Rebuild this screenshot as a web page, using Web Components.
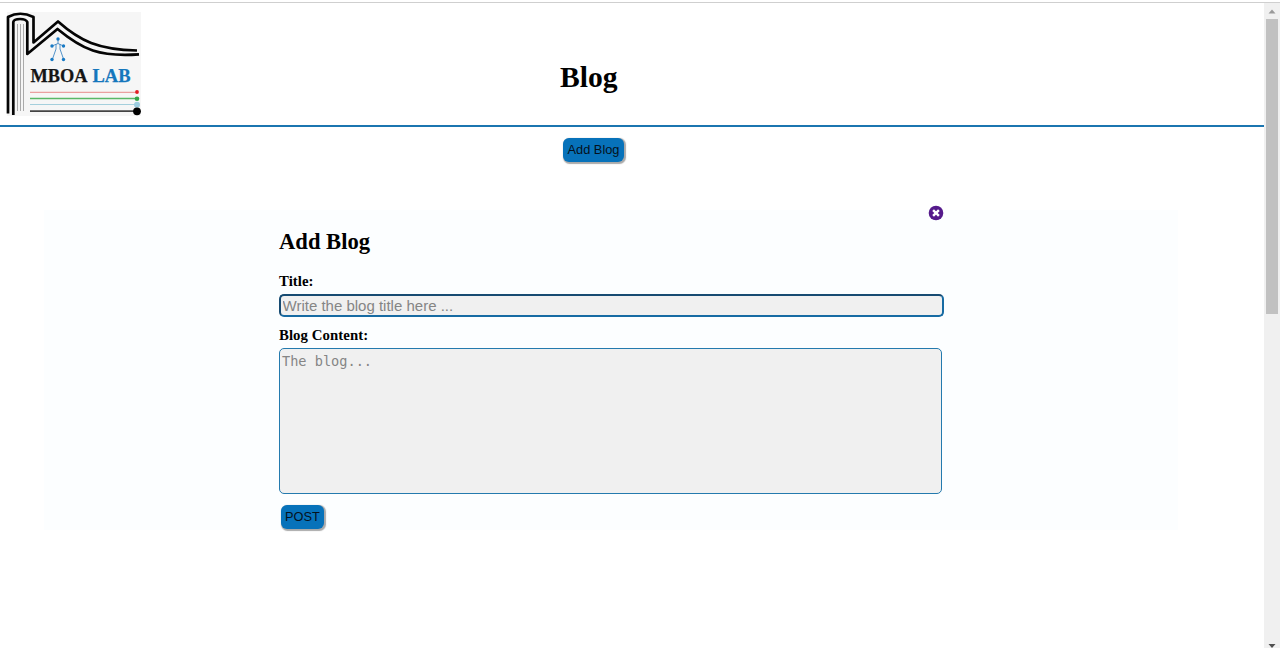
<!DOCTYPE html>
<html lang="en">
<head>
<meta charset="utf-8">
<title>Blog</title>
<style>html,body{margin:0;height:100%;overflow:hidden;background:#fff}</style>
</head>
<body>
<blog-app></blog-app>
<script>
const define = (name, html) => customElements.define(name, class extends HTMLElement {
  constructor() {
    super();
    const t = document.createElement('template');
    t.innerHTML = html;
    this.attachShadow({ mode: 'open' }).appendChild(t.content.cloneNode(true));
  }
});

define('mboa-logo', `
<style>:host{display:block;width:144px;height:112px}svg{display:block}</style>
<svg width="144" height="112" viewBox="0 8 144 112" fill="none">
  <rect x="7" y="12" width="134" height="104" fill="#f6f6f6"/>
  <g stroke="#aaa" stroke-width="1"><path d="M17.500 24V111M20.500 24V111M23.500 24V111"/></g>
  <g stroke="#050505" stroke-width="2.700" stroke-linejoin="round">
    <path d="M8 113.500V17Q20 10.500 33.500 17V42.500L58 21.500C80 41 98 49.500 137 50.500"/>
    <path d="M13.300 115V22Q14 19 20 19T27.300 22V54L57.500 29C83 50 99 57 139 54.300"/>
  </g>
  <g stroke="#4288c4" stroke-width=".9"><path d="M58 39V43.500M56 44V49L52.500 59M60 44V49L63.500 59M52 46L58 43.500L63.500 46"/></g>
  <g fill="#1779c4"><circle cx="58" cy="39" r="1.700"/><circle cx="52" cy="46" r="1.700"/><circle cx="63.500" cy="46" r="1.700"/><circle cx="52" cy="59.500" r="1.700"/><circle cx="63.500" cy="59.500" r="1.700"/></g>
  <g font-family="Liberation Serif,serif" font-weight="700" font-size="18">
    <text x="30.500" y="82" fill="#151515" stroke="#151515" stroke-width=".25" textLength="57" lengthAdjust="spacingAndGlyphs">MBOA</text>
    <text x="92.500" y="82" fill="#1577bd" stroke="#1577bd" stroke-width=".25" textLength="38" lengthAdjust="spacingAndGlyphs">LAB</text>
  </g>
  <path d="M30 92.300H137" stroke="#e88b8b"/><path d="M30 98.600H137" stroke="#59b867" stroke-width="1.500"/><path d="M30 104.500H137" stroke="#a5cfdc" stroke-width="1.200"/><path d="M30 111.200H137" stroke="#444" stroke-width="1.800"/>
  <circle cx="137" cy="92" r="1.900" fill="#e21d24"/><circle cx="137" cy="98.700" r="2.300" fill="#35a64a"/><circle cx="137" cy="104.700" r="3" fill="#9dcde0"/><circle cx="137" cy="111.300" r="3.900" fill="#000"/>
</svg>`);

define('page-header', `
<style>
:host{display:flex;box-sizing:border-box;height:127px;border-bottom:2px solid #1b75b0;padding-top:8px}
h1{margin:52px 0 0 416px;font:700 29.600px/34px "Liberation Serif",serif;color:#000}
</style>
<mboa-logo></mboa-logo><h1><slot></slot></h1>`);

define('action-button', `
<style>
:host{display:block;width:max-content}
button{display:block;box-sizing:border-box;width:var(--w);height:24px;margin:0;padding:0 0 1px;border:0;border-radius:6px;background:#0772ba;color:#05111c;font:12.800px/22px "Liberation Sans",sans-serif;box-shadow:1px 1px 1px .5px #aaa;white-space:nowrap}
</style>
<button type="button"><slot></slot></button>`);

define('close-icon', `
<style>:host{display:block;width:16px;height:16px}svg{display:block}</style>
<svg width="16" height="16" viewBox="0 0 16 16"><circle cx="8" cy="8" r="7.300" fill="#551a8b"/><path d="M5.100 5.100L10.900 10.900M10.900 5.100L5.100 10.900" stroke="#fff" stroke-width="2.400"/></svg>`);

define('blog-form', `
<style>
:host{display:flow-root;box-sizing:border-box;width:1134px;height:320px;margin:48px 0 0 44px;padding-left:235px;background:#fcfeff}
form{width:665px;display:flex;flex-direction:column;align-items:flex-start;margin-top:-5px}
close-icon{align-self:flex-end}
h2{margin:7px 0 0;font:700 22.600px/27px "Liberation Serif",serif}
label{font:700 14.800px/18px "Liberation Serif",serif;color:#000;letter-spacing:.06px}
.title{margin-top:17px}
input,textarea{box-sizing:border-box;display:block;margin:0;background:#f0f0f0;outline:0;resize:none;overflow:hidden}
input{width:665px;height:23px;margin:4px 0 9px;padding:0 2px 1px 1.500px;border:2px solid #176ba3;border-top-color:#174b72;border-left-color:#174b72;border-radius:5px;font:15px "Liberation Sans",sans-serif}
textarea{width:663px;height:146px;margin:4px 0 11px;padding:4px 2px;border:1px solid #247aae;border-radius:5px;font:13.600px/17px "DejaVu Sans Mono",monospace}
::placeholder{color:#858585;opacity:1}
action-button{margin-left:2px}
</style>
<form>
  <close-icon></close-icon>
  <h2>Add Blog</h2>
  <label class="title" for="t">Title:</label>
  <input id="t" placeholder="Write the blog title here ...">
  <label for="c">Blog Content:</label>
  <textarea id="c" placeholder="The blog..."></textarea>
  <action-button style="--w:43px">POST</action-button>
</form>`);

define('scroll-rail', `
<style>
:host{display:flex;flex-direction:column;justify-content:space-between;align-items:center;box-sizing:border-box;width:16px;height:645px;margin-top:3px;background:#f0f0f0}
svg{display:block}.thumb{width:12px;height:295px;margin-bottom:auto;background:#c1c1c1}
</style>
<svg width="16" height="16"><path d="M4.500 10.500L8 6.500L11.500 10.500Z" fill="#999"/></svg>
<div class="thumb"></div>
<svg width="16" height="8"><path d="M4.500 4L8 8L11.500 4Z" fill="#505050"/></svg>`);

define('blog-app', `
<style>
:host{display:grid;grid-template-columns:1264px 16px;height:648px;background:linear-gradient(#cfcfcf,#cfcfcf) 0 2px/100% 1px no-repeat #fff}
main{display:flow-root}
.add{margin:11px 0 0 563px}
</style>
<div><page-header>Blog</page-header>
<main><action-button class="add" style="--w:61px">Add Blog</action-button><blog-form></blog-form></main></div>
<scroll-rail></scroll-rail>`);
</script>
</body>
</html>
